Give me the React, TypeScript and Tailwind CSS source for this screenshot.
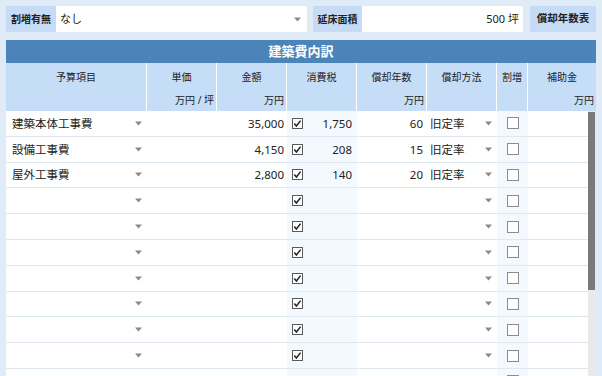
import React from "react";

const Arrow = () => (
  <svg width="7" height="5" viewBox="0 0 7 5" className="shrink-0">
    <path d="M0 0.5 L7 0.5 L3.5 4.5 Z" fill="#8a8a8a" />
  </svg>
);

const CheckOn = () => (
  <svg width="11" height="11" viewBox="0 0 11 11" className="shrink-0">
    <rect x="0.5" y="0.5" width="10" height="10" fill="#fff" stroke="#5a5a5a" />
    <path d="M2.3 5.6 L4.4 8 L8.6 2.6" fill="none" stroke="#222" strokeWidth="1.5" />
  </svg>
);

const CheckOff = () => (
  <svg width="12" height="12" viewBox="0 0 12 12" className="shrink-0">
    <rect x="0.5" y="0.5" width="11" height="11" fill="#fff" stroke="#8c8c8c" />
  </svg>
);

type Row = { name: string; amount: string; tax: string; years: string; method: string };

const rows: Row[] = [
  { name: "建築本体工事費", amount: "35,000", tax: "1,750", years: "60", method: "旧定率" },
  { name: "設備工事費", amount: "4,150", tax: "208", years: "15", method: "旧定率" },
  { name: "屋外工事費", amount: "2,800", tax: "140", years: "20", method: "旧定率" },
  ...Array.from({ length: 8 }, () => ({ name: "", amount: "", tax: "", years: "", method: "" })),
];

export default function App() {
  return (
    <div
      className="w-[602px] h-[376px] overflow-hidden bg-[#e0ebf8] px-[6px] pt-[6px] text-[#222]"
      style={{ fontFamily: '"Noto Sans", "Noto Sans CJK JP", sans-serif' }}
    >
      {/* top bar */}
      <div className="flex h-[26px] items-stretch">
        <div className="w-[50px] bg-[#c6dcf6] flex items-center justify-center text-[10px] font-bold">割増有無</div>
        <div className="w-[251px] bg-white flex items-center justify-between pl-[4px] pr-[6px] text-[11px]">
          <span>なし</span>
          <Arrow />
        </div>
        <div className="w-[6px]" />
        <div className="w-[49px] bg-[#c6dcf6] flex items-center justify-center text-[10px] font-bold">延床面積</div>
        <div className="w-[161px] bg-white flex items-center justify-end pr-[4px] text-[11px]">500 坪</div>
        <div className="w-[7px]" />
        <div className="w-[66px] bg-[#c6dcf6] flex items-center justify-center text-[10.5px] font-bold">償却年数表</div>
      </div>

      {/* table */}
      <div className="mt-[8px] w-[590px]">
        <div className="h-[23px] bg-[#4a84b8] flex items-center justify-center text-white text-[13px] font-bold">
          建築費内訳
        </div>
        <div className="h-[48px] bg-[#c6ddf8] grid grid-cols-[141px_70px_70px_70px_70px_70px_31px_68px] text-[10px]">
          {[
            ["予算項目", ""],
            ["単価", "万円 / 坪"],
            ["金額", "万円"],
            ["消費税", ""],
            ["償却年数", "万円"],
            ["償却方法", ""],
            ["割増", ""],
            ["補助金", "万円"],
          ].map(([a, b], i) => (
            <div key={i} className={`flex flex-col ${i < 7 ? "border-r border-white" : ""}`}>
              <div className="h-[27px] flex items-center justify-center pt-[1px]">{a}</div>
              <div className="h-[21px] flex items-center justify-end pr-[2px] pb-[1px]">{b}</div>
            </div>
          ))}
        </div>
        <div className="flex">
          <div className="w-[582px] bg-white">
            {rows.map((r, i) => (
              <div
                key={i}
                className="h-[25.8px] border-b border-[#dfe7f0] grid grid-cols-[141px_70px_70px_70px_70px_70px_31px_60px] text-[11.5px]"
              >
                <div className="flex items-center justify-between pl-[6px] pr-[5px]">
                  <span>{r.name}</span>
                  <Arrow />
                </div>
                <div />
                <div className="flex items-center justify-end pr-[3px]">{r.amount}</div>
                <div className="flex items-center justify-between pl-[5px] pr-[5px] bg-[#f4f9ff]">
                  <CheckOn />
                  <span>{r.tax}</span>
                </div>
                <div className="flex items-center justify-end pr-[4px]">{r.years}</div>
                <div className="flex items-center justify-between pl-[3px] pr-[5px]">
                  <span>{r.method}</span>
                  <Arrow />
                </div>
                <div className="flex items-center justify-center bg-[#f4f9ff]">
                  <CheckOff />
                </div>
                <div />
              </div>
            ))}
          </div>
          <div className="w-[8px] bg-[#e9e9e9] relative">
            <div className="absolute left-0 top-[1px] w-[7px] h-[178px] bg-[#7a7a7a]" />
          </div>
        </div>
      </div>
    </div>
  );
}
